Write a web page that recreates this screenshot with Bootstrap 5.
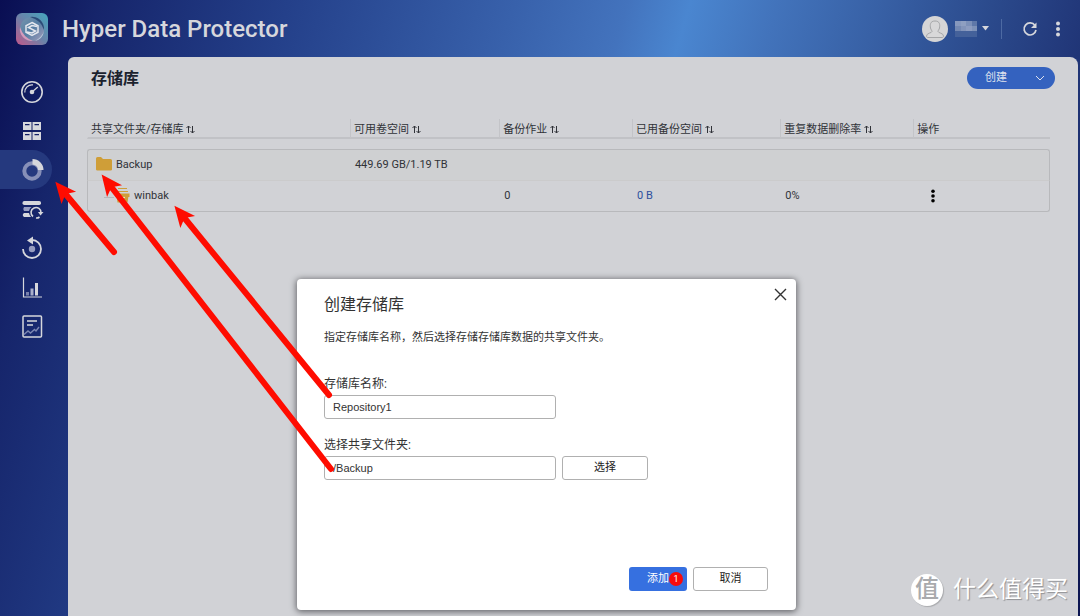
<!DOCTYPE html>
<html lang="zh-CN">
<head>
<meta charset="utf-8">
<meta name="viewport" content="width=device-width, initial-scale=1">
<title>Hyper Data Protector</title>
<link href="https://cdn.jsdelivr.net/npm/bootstrap@5.3.0/dist/css/bootstrap.min.css" rel="stylesheet">
<style>
  body {
    font-family: Roboto, "Noto Sans CJK SC", sans-serif;
    font-size: 11px;
    line-height: 16px;
    color: #303238;
    background: linear-gradient(106deg, #090e52 0%, #16256b 8%, #24408a 23%, #3861ab 41%, #4373bd 50%, #4a86d0 55%, #4273bb 62%, #3861a6 70%, #2b4a8c 79%, #22387a 86%, #0b1450 100%);
  }
  .topbar { height: 57px; padding: 0 16px; }
  .brand { font-size: 24px; font-weight: 500; line-height: 32px; color: #d6d7dc; margin-left: 14px; }
  .avatar-name { width: 22px; height: 16px; margin-left: 7px; display: grid; grid-template-columns: repeat(4, 1fr); }
  .avatar-name i:nth-child(1) { background: #8698bd; }
  .avatar-name i:nth-child(2) { background: #8e9fc1; }
  .avatar-name i:nth-child(3) { background: #7c90b8; }
  .avatar-name i:nth-child(4) { background: #5f78a8; }
  .avatar-name i:nth-child(5) { background: #7388b2; }
  .avatar-name i:nth-child(6) { background: #8294ba; }
  .avatar-name i:nth-child(7) { background: #8c9cc0; }
  .avatar-name i:nth-child(8) { background: #7e92b8; }
  .avatar-name i:nth-child(n+9) { background: #44619a; }
  .icon-btn { color: #d6d7dc; line-height: 0; }
  .icon-btn:hover { color: #fff; }
  .user-rule { width: 1px; height: 20px; margin: 0 20px 0 12px; background: #4d6aa3; }
  .refresh-btn { margin-right: 14px; }
  .sidebar { width: 68px; padding-top: 15px; color: #d6d7dc; }
  .side-link { display: flex; align-items: center; width: 52px; height: 39px; padding-left: 20px; color: inherit; border-radius: 0 20px 20px 0; }
  .side-link.active { background: #25397e; }
  .workspace { min-width: 0; margin-right: 2px; padding: 10px 23px 0 19px; background: #d1d2d6; border-radius: 6px 8px 0 0; }
  .page-title { font-size: 16px; line-height: 24px; font-weight: 700; color: #1b222e; padding-left: 4px; }
  .create-btn { width: 88px; height: 22px; padding: 0 10px 0 18px; font-size: 11px; line-height: 16px; color: #dfe3ee; background: #3462bf; }
  .create-btn:hover { color: #fff; background: #2c56ac; }
  .repo-scroll { margin-top: 28px; padding-right: 5px; }
  .repo-table { table-layout: fixed; width: 100%; border-collapse: separate; border-spacing: 0; }
  .repo-table th { height: 20px; padding: 2px 3px 0; font-weight: 400; line-height: 15px; white-space: nowrap; border-left: 1px solid #c3c4c8; border-bottom: 2px solid #c1c2c6; vertical-align: middle; }
  .repo-table th:first-child { border-left-color: transparent; }
  .repo-table th svg { vertical-align: -1px; }
  .repo-table .gap-row td { height: 10px; }
  .repo-table .item td { height: 31px; padding: 0 5px; border: 0 solid #b8b9bc; vertical-align: middle; }
  .repo-table .item td:first-child { border-left-width: 1px; padding-left: 8px; }
  .repo-table .item td:last-child { border-right-width: 1px; }
  .repo-table .parent td { border-top-width: 1px; border-bottom: 1px solid #cbcbcc; background: #cfd0d2; height: 32px; }
  .repo-table .parent td:first-child { border-top-left-radius: 3px; }
  .repo-table .parent td:last-child { border-top-right-radius: 3px; }
  .repo-table .child td { border-bottom-width: 1px; }
  .repo-table .child td:first-child { border-bottom-left-radius: 3px; }
  .repo-table .child td:last-child { border-bottom-right-radius: 3px; padding-left: 17px; }
  .repo-table a { color: #2d4f9e; text-decoration: none; }
  .w-name { width: 27.3%; } .w-free { width: 15.5%; } .w-jobs { width: 13.8%; }
  .w-used { width: 15.4%; } .w-rate { width: 13.8%; }
  .create-dialog { position: absolute; left: 297px; top: 279px; width: 499px; z-index: 10; padding: 15px 28px 19px 27px; background: #fff; border-radius: 4px; box-shadow: 0 1px 6px 1px #66676b; color: #333; }
  .create-dialog h2 { font-size: 16px; line-height: 22px; font-weight: 400; margin: 0 0 14px; }
  .dialog-close { position: absolute; right: 9px; top: 9px; line-height: 0; color: #333; }
  .create-dialog label { font-size: 12px; line-height: 16px; margin-bottom: 3px; }
  .field { margin-bottom: 18px; }
  .intro { margin-bottom: 30px; }
  .text-box { width: 232px; height: 24px; min-height: 24px; padding: 0 8px; font: 11px "Liberation Sans", sans-serif; color: #333; border: 1px solid #b0b0b0; border-radius: 3px; }
  .button-gap { gap: 6px; }
  .dialog-actions { margin-top: 87px; }
  .plain-btn, .primary-btn { height: 24px; padding: 0; font-size: 11px; line-height: 22px; border-radius: 3px; }
  .plain-btn { border: 1px solid #b0b0b0; background: #fff; color: #222; }
  .primary-btn { width: 58px; background: #3670e0; color: #fff; }
  .pick { width: 86px; } .cancel { width: 75px; }
  .step-dot { width: 14px; height: 14px; border-radius: 50%; background: #f80b0b; color: #fff; font-size: 9px; line-height: 14px; }
  .arrows { position: absolute; left: 0; top: 0; z-index: 20; pointer-events: none; }
  .site-mark { position: absolute; right: 12px; bottom: 9px; z-index: 5; color: #fff; font-size: 23px; line-height: 34px; text-shadow: 1px 1px 1px #8f9094; gap: 10px; }
  .site-seal { width: 32px; height: 32px; border-radius: 50%; background: #fff; color: #a9aaad; font-size: 24px; line-height: 31px; font-weight: 500; text-shadow: none; box-shadow: 1px 1px 1px #aaabae; }
</style>
</head>
<body class="min-vh-100 d-flex flex-column position-relative overflow-hidden">

<header class="topbar d-flex align-items-center">
  <svg width="32" height="32" viewBox="0 0 32 32" aria-hidden="true">
    <defs>
      <linearGradient id="tile" x1="1" y1="0" x2="0" y2="1"><stop offset="0" stop-color="#45a5bd"/><stop offset=".5" stop-color="#6a83a9"/><stop offset="1" stop-color="#c0588b"/></linearGradient>
      <linearGradient id="disc" x1="0" y1="0" x2="1" y2="1"><stop offset="0" stop-color="#7796ae"/><stop offset=".5" stop-color="#557da3"/><stop offset="1" stop-color="#a69fbd"/></linearGradient>
    </defs>
    <rect width="32" height="32" rx="6" fill="url(#tile)"/>
    <circle cx="16" cy="16" r="12" fill="url(#disc)"/>
    <path d="M14 4A12 12 0 0 1 28 17Q25 7 14 4Z" fill="#2b4c78"/>
    <path d="M4 14A12 12 0 0 0 17 28Q7 24 4 14Z" fill="#d69abb"/>
    <path d="M28 18A12 12 0 0 1 19 28Q26 24 28 18Z" fill="#b8c8d8"/>
    <path d="M16 9.500l6 3.300v6.400l-6 3.300-6-3.300v-6.400z" fill="none" stroke="#e4e7ee" stroke-width="1.500"/>
    <path d="M21 13.500l-5-1-3.500 2 7 3.500-3.500 2-5-1" fill="none" stroke="#e4e7ee" stroke-width="1.500"/>
  </svg>
  <h1 class="brand mb-0 text-nowrap">Hyper Data Protector</h1>
  <div class="d-flex align-items-center ms-auto">
    <button type="button" class="btn p-0 border-0 d-flex align-items-center icon-btn" aria-label="用户">
      <svg width="26" height="26" viewBox="0 0 26 26"><circle cx="13" cy="13" r="13" fill="#d5d5d6"/><path d="M13 5c-5 0-5 4-4.500 7 .3 1.500 1.500 2.500 1.500 3.500 0 1.500-5.500 1.500-5.500 4.500 0 1 .5 1.500 1.500 1.500h14c1 0 1.500-.5 1.500-1.500 0-3-5.500-3-5.500-4.500 0-1 1.200-2 1.500-3.500C18 9 18 5 13 5z" fill="#d8d8d9" stroke="#a5a6a8"/></svg>
      <span class="avatar-name"><i></i><i></i><i></i><i></i><i></i><i></i><i></i><i></i><i></i><i></i><i></i><i></i></span>
      <svg class="ms-1" width="8" height="5" viewBox="0 0 8 5"><path d="M1 0h7L4.500 4.500z" fill="currentColor"/></svg>
    </button>
    <span class="user-rule"></span>
    <button type="button" class="btn p-0 border-0 icon-btn refresh-btn" aria-label="刷新">
      <svg width="16" height="16" viewBox="0 0 16 16" fill="none"><path d="M13 4.500A6 6 0 1 0 14 9" stroke="currentColor" stroke-width="1.700"/><path d="M14.500 1.500V7H9z" fill="currentColor"/></svg>
    </button>
    <button type="button" class="btn p-0 border-0 icon-btn" aria-label="更多">
      <svg width="12" height="16" viewBox="0 0 12 16" fill="currentColor"><circle cx="6" cy="2.500" r="2"/><circle cx="6" cy="8" r="2"/><circle cx="6" cy="13.500" r="2"/></svg>
    </button>
  </div>
</header>

<div class="d-flex flex-grow-1">
  <nav class="sidebar flex-shrink-0" aria-label="主菜单">
    <a class="side-link" href="#" aria-label="仪表盘"><svg width="24" height="24" viewBox="0 0 24 24" fill="none" stroke="currentColor"><circle cx="12" cy="12" r="10.200" stroke-width="1.600"/><path d="M4.800 12.500A7.200 7.200 0 0 1 13 4.900" stroke-width="1.200"/><path d="M12 12l5.800-5" stroke-width="1.300"/><circle cx="12" cy="12" r="2.300" fill="currentColor" stroke="none"/></svg></a>
    <a class="side-link" href="#" aria-label="清单"><svg width="24" height="24" viewBox="0 0 24 24" fill="currentColor"><path fill-rule="evenodd" d="M3 3h8.500v8H3zM5 5v1.300h4.500V5zM12.500 3H21v8h-8.500zM14.500 5v1.300H19V5zM3 13h8.500v8H3zM5 15v1.300h4.500V15zM12.500 13H21v8h-8.500zM14.500 15v1.300H19V15z"/></svg></a>
    <a class="side-link active" href="#" aria-label="存储库"><svg width="24" height="24" viewBox="0 0 24 24" fill="none"><circle cx="12" cy="13" r="7.700" stroke="#8790b8" stroke-width="4"/><path d="M12.500 1A11 11 0 0 1 23.500 12h-5.500a5.500 5.500 0 0 0-5.500-5.500z" fill="currentColor"/></svg></a>
    <a class="side-link" href="#" aria-label="备份"><svg width="24" height="24" viewBox="0 0 24 24" fill="none"><rect x="2.500" y="4" width="18.500" height="4" rx="1.800" fill="currentColor"/><path d="M4 10h7.500q-2 1.500-2.500 4H4q-1.500-2 0-4z" fill="#979dc0"/><path d="M4 16h5q.5 2.500 2 4H4q-2.500-2 0-4z" fill="currentColor"/><path d="M13 19.500A5 5 0 1 1 21 16M19.500 20A5 5 0 0 1 16 21" stroke="currentColor" stroke-width="1.600"/><path d="M18 15h5.500l-3 3.500z" fill="currentColor"/></svg></a>
    <a class="side-link" href="#" aria-label="还原"><svg width="24" height="24" viewBox="0 0 24 24" fill="none"><path d="M12 4A9 9 0 1 1 3 13" stroke="currentColor" stroke-width="1.800"/><path d="M7 4.500l6-4v8z" fill="currentColor"/><circle cx="12" cy="13" r="3.200" fill="#979dc0"/></svg></a>
    <a class="side-link" href="#" aria-label="报告"><svg width="24" height="24" viewBox="0 0 24 24"><path d="M3.500 2.500v19.500H22" fill="none" stroke="currentColor" stroke-width="1.200"/><path d="M6 17h3v3.500H6z" fill="#777fab"/><path d="M10.500 13.500h3v7h-3z" fill="#aab0cb"/><path d="M15 8h3v12.500h-3z" fill="currentColor"/></svg></a>
    <a class="side-link" href="#" aria-label="日志"><svg width="24" height="24" viewBox="0 0 24 24" fill="none" stroke="currentColor"><rect x="3" y="2" width="18.500" height="21" rx="1" stroke-width="1.500"/><path d="M7 7h10M7 11h6" stroke-width="1.500"/><path d="M4 20.500l4-3.500 2.500 2 4-3.500 1.500 1.500 3-4" stroke="#7d87b3" stroke-width="1.400"/></svg></a>
  </nav>

  <main class="workspace flex-grow-1">
    <div class="d-flex justify-content-between align-items-start">
      <h2 class="page-title mb-0">存储库</h2>
      <button type="button" class="btn border-0 rounded-pill create-btn d-flex align-items-center justify-content-between">创建
        <svg width="10" height="6" viewBox="0 0 10 6" fill="none" stroke="currentColor"><path d="M1 1l4 4 4-4"/></svg>
      </button>
    </div>
    <div class="repo-scroll">
      <table class="repo-table">
        <colgroup><col class="w-name"><col class="w-free"><col class="w-jobs"><col class="w-used"><col class="w-rate"><col></colgroup>
        <thead>
          <tr>
            <th scope="col">共享文件夹/存储库 <svg width="9" height="9" viewBox="0 0 9 9" fill="none" stroke="currentColor"><path d="M2.500 8V1M.5 3l2-2 2 2M6.500 1v7M4.500 6l2 2 2-2"/></svg></th>
            <th scope="col">可用卷空间 <svg width="9" height="9" viewBox="0 0 9 9" fill="none" stroke="currentColor"><path d="M2.500 8V1M.5 3l2-2 2 2M6.500 1v7M4.500 6l2 2 2-2"/></svg></th>
            <th scope="col">备份作业 <svg width="9" height="9" viewBox="0 0 9 9" fill="none" stroke="currentColor"><path d="M2.500 8V1M.5 3l2-2 2 2M6.500 1v7M4.500 6l2 2 2-2"/></svg></th>
            <th scope="col">已用备份空间 <svg width="9" height="9" viewBox="0 0 9 9" fill="none" stroke="currentColor"><path d="M2.500 8V1M.5 3l2-2 2 2M6.500 1v7M4.500 6l2 2 2-2"/></svg></th>
            <th scope="col">重复数据删除率 <svg width="9" height="9" viewBox="0 0 9 9" fill="none" stroke="currentColor"><path d="M2.500 8V1M.5 3l2-2 2 2M6.500 1v7M4.500 6l2 2 2-2"/></svg></th>
            <th scope="col">操作</th>
          </tr>
        </thead>
        <tbody>
          <tr class="gap-row" aria-hidden="true"><td colspan="6"></td></tr>
          <tr class="item parent">
            <td><span class="d-flex align-items-center"><svg class="me-1" width="16" height="16" viewBox="0 0 16 16"><path d="M1.500 0H5l2 2h7.500Q16 2 16 3.500v9q0 1-1.500 1h-13Q0 13.500 0 12.500v-11Q0 0 1.500 0z" fill="#cf9e38"/></svg>Backup</span></td>
            <td>449.69 GB/1.19 TB</td><td></td><td></td><td></td><td></td>
          </tr>
          <tr class="item child">
            <td><span class="d-flex align-items-center ps-2"><svg class="me-1" width="26" height="16" viewBox="0 0 26 16"><path d="M0 9.500h10" stroke="#b7b8bb"/><path d="M14 .5h9M13 3.500h11" stroke="#cf9e38"/><path d="M11.500 5.500h14V9h-14zM12.500 8h12l-1 6.500h-10z" fill="#cf9e38"/><path d="M16 9.500h5" stroke="#eee0c0" stroke-width="1.200"/></svg>winbak</span></td>
            <td></td><td>0</td><td><a href="#">0 B</a></td><td>0%</td>
            <td><button type="button" class="btn p-0 border-0 text-black d-flex" aria-label="操作"><svg width="6" height="14" viewBox="0 0 6 14" fill="currentColor"><circle cx="3" cy="2.200" r="1.800"/><circle cx="3" cy="7" r="1.800"/><circle cx="3" cy="11.800" r="1.800"/></svg></button></td>
          </tr>
        </tbody>
      </table>
    </div>
  </main>
</div>

<div class="site-mark d-flex align-items-center text-nowrap"><span class="site-seal text-center">值</span>什么值得买</div>

<form class="create-dialog" role="dialog" aria-labelledby="dlg-title">
  <button type="button" class="btn p-0 border-0 dialog-close" aria-label="关闭"><svg width="13" height="13" viewBox="0 0 13 13" stroke="currentColor" stroke-width="1.400"><path d="M1 1l11 11M12 1L1 12"/></svg></button>
  <h2 id="dlg-title">创建存储库</h2>
  <p class="intro">指定存储库名称，然后选择存储存储库数据的共享文件夹。</p>
  <div class="field">
    <label class="d-block" for="repo-name">存储库名称:</label>
    <input class="form-control text-box" id="repo-name" type="text" value="Repository1">
  </div>
  <label class="d-block" for="share">选择共享文件夹:</label>
  <div class="d-flex button-gap">
    <input class="form-control text-box" id="share" type="text" value="/Backup">
    <button type="button" class="btn plain-btn pick">选择</button>
  </div>
  <div class="d-flex justify-content-end button-gap dialog-actions">
    <button type="submit" class="btn border-0 primary-btn d-flex align-items-center justify-content-end pe-1">添加<span class="step-dot">1</span></button>
    <button type="button" class="btn plain-btn cancel">取消</button>
  </div>
</form>

<svg class="arrows" width="400" height="500" viewBox="0 0 400 500" fill="none" stroke="#ff0c00" stroke-width="6" stroke-linecap="round" aria-hidden="true">
  <defs><marker id="head" markerUnits="userSpaceOnUse" markerWidth="24" markerHeight="24" refX="10" refY="10" orient="auto" overflow="visible"><path d="M22 10L1 0.500 6 10 1 19.500z" fill="#ff0c00" stroke="none"/></marker></defs>
  <path d="M114 252L63 191" marker-end="url(#head)"/>
  <path d="M331 469L109 184" marker-end="url(#head)"/>
  <path d="M329 395L182 215" marker-end="url(#head)"/>
</svg>

<script src="https://cdn.jsdelivr.net/npm/bootstrap@5.3.0/dist/js/bootstrap.bundle.min.js"></script>
</body>
</html>
